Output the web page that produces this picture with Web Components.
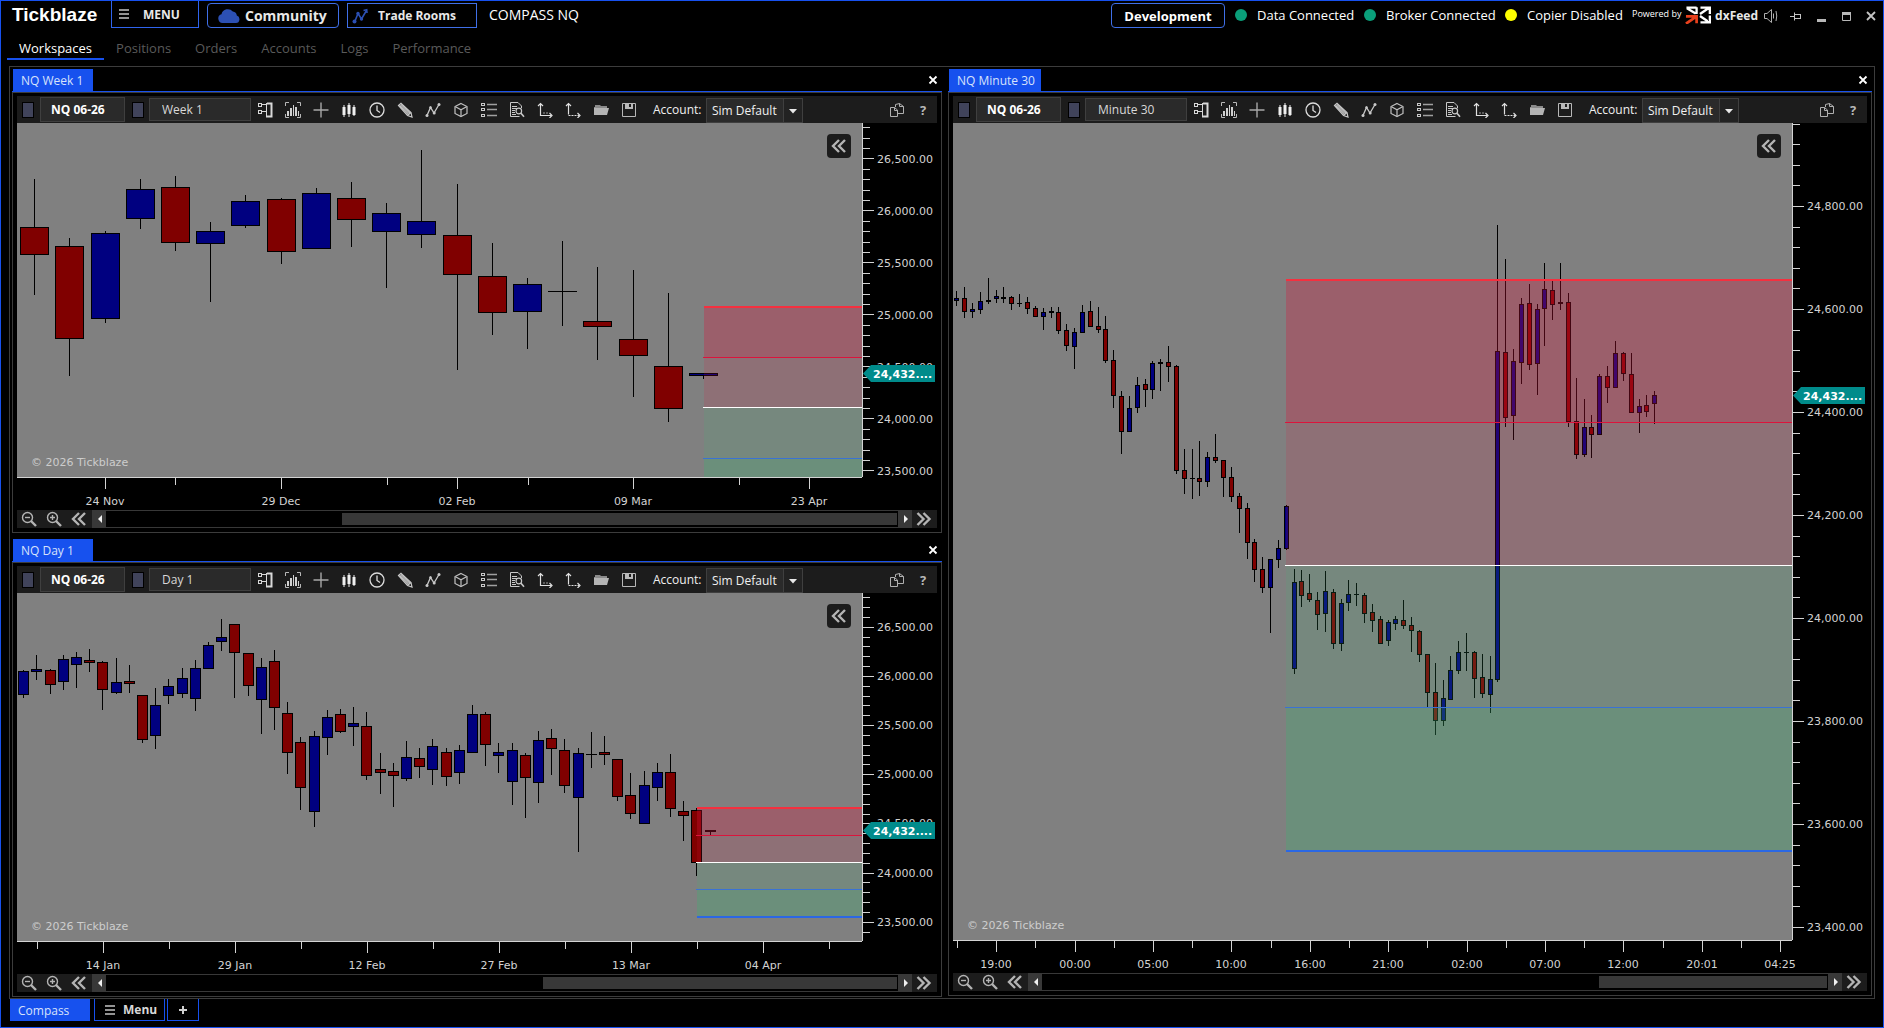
<!DOCTYPE html>
<html lang="en">
<head>
<meta charset="utf-8">
<title>Tickblaze</title>
<style>
  html, body { height: 100%; margin: 0; background: #000; }
  body { font-family: "Open Sans", "Noto Sans", sans-serif; font-size: 12px; color: #fff; }
</style>
</head>
<body>
<tb-app></tb-app>

<script>
const BASE = `
  * { box-sizing: border-box; }
  button { font: inherit; color: inherit; background: none; border: 0; padding: 0; margin: 0; cursor: pointer; }
  svg { display: block; }
`;

function define(name, css, markup, setup) {
  customElements.define(name, class extends HTMLElement {
    connectedCallback() {
      if (this.shadowRoot) return;
      const root = this.attachShadow({ mode: "open" });
      const html = typeof markup === "function" ? markup(this) : markup;
      root.innerHTML = `<style>${BASE}${css}</style>${html}`;
      if (setup) setup(this, root);
    }
  });
}

/* ---------- icons ---------- */
const ICONS = {
  layout: `<g fill="none" stroke="#d8d8d8"><rect x="1.5" y="1.5" width="3" height="3"/><rect x="1.5" y="8.5" width="3" height="3"/><path d="M5 2.500H9M5 9.500H9M9.500 1V15.500"/><path d="M10 1.500H14.500V14.500H10" stroke-width="2"/></g>`,
  indicator: `<g fill="none" stroke="#b8b8b8"><path d="M.5 4V.5H4M12 .5H15.500V4M.5 12V15.500H4M12 15.500H15.500V12"/></g><path fill="#d0d0d0" d="M2 9h2v5H2zM5 6h2v8H5zM8 3h1v11H8zM10 5h2v9h-2zM13 9h1v5h-1z"/>`,
  cross: `<path d="M8 .5V15.500M.5 8H15.500" stroke="#a8a8a8" stroke-width="1.400"/>`,
  candles: `<path fill="#f0f0f0" d="M1.500 5h3v8h-3zM6.500 3h3v9h-3zM11.500 5h3v8h-3z"/><path stroke="#f0f0f0" d="M3 3V15M8 1V15M13 3V14"/>`,
  clock: `<g fill="none" stroke="#dcdcdc" stroke-width="1.300"><circle cx="8" cy="8" r="7"/><path d="M8 3.500V8.500L11 10.500"/></g>`,
  pencil: `<g fill="none" stroke="#c8c8c8" stroke-width="1.200"><path d="M1.500 3.500L4 1.200L14 10.500L15 15L10.500 13.500Z"/><path d="M2.500 3.500L12 13M4 2.500L13.500 11.500M10.500 13.500L14 10.500"/></g><path fill="#aaa" d="M3 3.500L4 2.300L12.500 10.500L11 12.500Z"/>`,
  trend: `<g fill="none" stroke="#c8c8c8" stroke-width="1.300"><path d="M2 13.500L5.500 5.500L9 11L14 2.500"/></g><g fill="#c8c8c8"><circle cx="2" cy="13.500" r="1.500"/><circle cx="5.500" cy="5.500" r="1.300"/><circle cx="9.200" cy="11" r="1.500"/><circle cx="14" cy="2.500" r="1.500"/></g>`,
  cube: `<g fill="none" stroke="#c0c0c0" stroke-width="1.200"><path d="M8 1.500L14 4.500V11.500L8 14.500L2 11.500V4.500Z"/><path d="M2.500 4.800L8 7.800L13.500 4.800M8 7.800V14.500"/></g>`,
  list: `<g fill="none" stroke="#c8c8c8"><rect x=".5" y="1.500" width="3" height="2"/><rect x=".5" y="6.500" width="3" height="2"/><rect x=".5" y="12.500" width="3" height="2"/><path d="M6 2.500H16M6 7.500H16M6 13.500H16" stroke="#a0a0a0" stroke-width="1.500"/></g>`,
  report: `<g fill="none" stroke="#c8c8c8"><path d="M10.500 14.500H1.500V.5H9L12.500 4V6"/><path d="M3 4.500H8M3 6.500H8M3 8.500H6M3 10.500H6M3 12.500H7"/><circle cx="9.800" cy="9" r="2.800" stroke-width="1.200"/><path d="M11.800 11L15 14.800" stroke-width="1.600"/></g>`,
  axisA: `<g fill="none" stroke="#e0e0e0" stroke-width="1.200"><path d="M3.500 2V13.500H14"/><path d="M1 4L3.500 1.500L6 4M12.500 11L15 13.500L12.500 16"/><path d="M6 11H11" stroke-dasharray="2 1" stroke="#999"/></g>`,
  axisB: `<g fill="none" stroke="#e0e0e0" stroke-width="1.200"><path d="M3.500 2V12.500"/><path d="M1 4L3.500 1.500L6 4M12.500 11L15 13.500L12.500 16"/><path d="M3.500 13.500H14" stroke-dasharray="2 1"/></g>`,
  folder: `<path fill="#8a8a8a" d="M2 3h5l1 1h6v2H2z"/><path fill="#b4b4b4" d="M3 6h13l-2 7H1V5z"/>`,
  save: `<path fill="none" stroke="#b8b8b8" d="M1.500 1.500H14.500V14.500H1.500Z"/><path fill="#b8b8b8" d="M4 2h8v5H4z"/><path fill="#1c1c1c" d="M8 2h2v3H8z"/>`,
  copy: `<g fill="none" stroke="#b0b0b0"><path d="M2 14.500H8.500V8L5.500 5.500H1.500V14.500Z"/><path d="M6.500 5V2.500L10.500 1.500L14.500 4.500V11.500H9"/><path d="M10.500 1.500V4.500H14.500M5.500 5.500V8.500H8.500"/></g>`,
  zoomOut: `<g fill="none" stroke="#b4b4b4" stroke-width="1.400"><circle cx="6.500" cy="6.500" r="5"/><path d="M4 6.500H9"/><path d="M10 10L15 15" stroke-width="2.400"/></g>`,
  zoomIn: `<g fill="none" stroke="#b4b4b4" stroke-width="1.400"><circle cx="6.500" cy="6.500" r="5"/><path d="M4 6.500H9M6.500 4V9"/><path d="M10 10L15 15" stroke-width="2.400"/></g>`,
  back: `<path fill="none" stroke="#b4b4b4" stroke-width="2.400" d="M8 2L2 8L8 14M14 2L8 8L14 14"/>`,
  forward: `<path fill="none" stroke="#b4b4b4" stroke-width="2.400" d="M1.500 2L7.500 8L1.500 14M7.500 2L13.500 8L7.500 14"/>`,
  close: `<path fill="none" stroke="#fff" stroke-width="1.800" d="M4.500 4.500L11.500 11.500M11.500 4.500L4.500 11.500"/>`,
  menu: `<path stroke="#c4c4c4" stroke-width="1.600" d="M3 4H13M3 8H13M3 12H13"/>`,
  plus: `<path stroke="#d0d0d0" stroke-width="2" d="M8 4V12M4 8H12"/>`,
  caret: `<path fill="#e8e8e8" d="M4 6H12L8 10.500Z"/>`,
  left: `<path fill="#f0f0f0" d="M10 4V12L6 8Z"/>`,
  right: `<path fill="#f0f0f0" d="M6 4V12L10 8Z"/>`,
  pin: `<g fill="none" stroke="#c4c4c4"><path d="M2 8.500H6M6.500 4.500V12.500"/><rect x="6.500" y="6.500" width="6" height="4"/></g>`,
  minimize: `<path fill="#b8b8b8" d="M4 11h9v3H4z"/>`,
  maximize: `<path fill="none" stroke="#b8b8b8" d="M4.500 5V12.500H12.500V5"/><path fill="#b8b8b8" d="M4 4h9v3H4z"/>`,
  exit: `<path fill="none" stroke="#c4c4c4" stroke-width="1.800" d="M4 4L12 12M12 4L4 12"/>`,
  sound: `<g fill="none" stroke="#b0b0b0"><path d="M1.500 5.500H4L8.500 1.500V14.500L4 10.500H1.500Z"/><path d="M10.500 5.500V10.500M13 3Q14.500 8 13 13"/></g>`,
  trade: `<g fill="none" stroke="#2c50b4" stroke-width="1.600"><path d="M3 13L6 5.500L9.500 11L14.500 2.500"/><path d="M11.500 2.500L14.700 1.800L15 5"/></g><g fill="#2c50b4"><circle cx="2.500" cy="13.500" r="2"/><circle cx="6" cy="5.500" r="1.700"/><circle cx="9.500" cy="11" r="1.700"/></g>`
};
define("tb-icon", `:host { display: block; width: 16px; height: 16px; flex: none; }`,
  el => `<svg width="16" height="16" viewBox="0 0 16 16" aria-hidden="true">${ICONS[el.getAttribute("name")]}</svg>`);

/* ---------- title bar ---------- */
define("tb-title-bar", `
  :host { display: flex; align-items: flex-start; height: 31px; color: #fff; font-size: 13px; padding: 0 0 0 11px; }
  .brand { font: bold 19px/28px "Liberation Sans", sans-serif; width: 99px; }
  button.box { display: flex; align-items: center; border: 1px solid #3f6fe8; height: 25px; margin-top: 2px; font-weight: bold; color: #e8e8e8; }
  button.menu { height: 27px; margin-top: 0; border-top: 0; width: 88px; padding-left: 4px; gap: 11px; border-color: #2f64ee; font-size: 12px; margin-right: 8px; }
  button.community { width: 132px; border-radius: 4px; padding-left: 10px; gap: 5px; font-size: 14px; margin-right: 8px; }
  button.rooms { width: 130px; padding-left: 4px; gap: 10px; font-size: 12px; margin-right: 12px; }
  button.dev { width: 114px; justify-content: center; border-radius: 4px; color: #fff; margin-right: 10px; }
  .name { line-height: 28px; font-size: 14px; flex: 1; }
  .status { display: flex; align-items: center; height: 28px; }
  .status::before { content: ""; width: 12px; height: 12px; border-radius: 50%; background: var(--dot); margin-right: 10px; }
  .status.data { width: 129px; } .status.broker { width: 141px; } .status.copier { width: 127px; }
  .powered { font-size: 9px; line-height: 26px; width: 53px; white-space: nowrap; }
  .feed { display: flex; gap: 4px; align-items: center; height: 28px; font-weight: bold; font-size: 12px; color: #e8e8e8; width: 73px; }
  .feed svg { margin-top: -1px; }
  .controls { display: flex; height: 30px; align-items: center; }
  .controls button { width: 25px; display: grid; place-items: center; }
`, `
  <div class="brand">Tickblaze</div>
  <button class="box menu"><tb-icon name="menu"></tb-icon>MENU</button>
  <button class="box community">
    <svg width="22" height="15" viewBox="0 0 22 15" aria-hidden="true"><path fill="#2c50b4" d="M5 15A4.500 4.500 0 0 1 3.500 6.200A6.500 6.500 0 0 1 14.800 3.500A4.500 4.500 0 0 1 18.800 7.600A3.800 3.800 0 0 1 18 15Z"/></svg>Community</button>
  <button class="box rooms"><tb-icon name="trade"></tb-icon>Trade Rooms</button>
  <div class="name">COMPASS NQ</div>
  <button class="box dev">Development</button>
  <div class="status data" style="--dot:#0a9f7a">Data Connected</div>
  <div class="status broker" style="--dot:#0a9f7a">Broker Connected</div>
  <div class="status copier" style="--dot:#ffff00">Copier Disabled</div>
  <div class="powered">Powered by</div>
  <div class="feed">
    <svg width="27" height="18" viewBox="0 0 27 18" aria-hidden="true">
      <g fill="none" stroke="#fff" stroke-width="2.400"><path d="M1.500 1.300H12M12 1V8M2 2L11 7.500M16 1.300H25.700V8M25 1.500L15.500 8M25.700 9.500V16.700H16M15.500 10L25 16.500"/></g>
      <path fill="none" stroke="#e8401c" stroke-width="2.800" d="M1 10.500H12V17.500M12 10.500L1 18"/></svg>
    dxFeed</div>
  <div class="controls">
    <button aria-label="Sound"><tb-icon name="sound"></tb-icon></button>
    <button aria-label="Pin"><tb-icon name="pin"></tb-icon></button>
    <button aria-label="Minimize"><tb-icon name="minimize"></tb-icon></button>
    <button aria-label="Maximize"><tb-icon name="maximize"></tb-icon></button>
    <button aria-label="Close"><tb-icon name="exit"></tb-icon></button>
  </div>
`);

/* ---------- main navigation ---------- */
define("tb-nav", `
  :host { display: block; padding-left: 6px; }
  nav { display: flex; }
  a { color: #5a5a5a; font-size: 13px; line-height: 20px; padding: 6px 12px 0; text-decoration: none; border-bottom: 2px solid transparent; }
  a.on { color: #fff; border-color: #1751ee; }
`, `<nav><a class="on" href="#workspaces">Workspaces</a><a href="#positions">Positions</a><a href="#orders">Orders</a><a href="#accounts">Accounts</a><a href="#logs">Logs</a><a href="#performance">Performance</a></nav>`);

/* ---------- docked panel ---------- */
define("tb-panel", `
  :host { display: flex; flex-direction: column; min-width: 0; min-height: 0; }
  header { display: flex; justify-content: space-between; align-items: center; height: 23px; border-bottom: 1px solid #1751ee; padding: 0 1px; }
  h2 { margin: 0; font-size: 12px; font-weight: normal; line-height: 20px; padding: 2px 6px 0 8px; min-width: 80px; background: #1751ee; color: #d8e2fb; }
  .body { flex: 1; min-height: 0; display: flex; flex-direction: column; border: 1px solid #3c3c3c; padding: 3px 4px 4px; }
`, el => `<header><h2>${el.getAttribute("label")}</h2><button aria-label="Close panel"><tb-icon name="close"></tb-icon></button></header><div class="body"><slot></slot></div>`);

/* ---------- chart toolbar ---------- */
const TOOLS = ["layout", "indicator", "cross", "candles", "clock", "pencil", "trend", "cube", "list", "report", "axisA", "axisB", "folder", "save"];
define("tb-toolbar", `
  :host { display: flex; align-items: center; height: 27px; flex: none; background: #1c1c1c; padding: 0 5px; color: #f0f0f0; }
  .swatch { width: 12px; height: 16px; border: 1px solid #000; background: #40435a; flex: none; }
  input { font: inherit; color: #d8d8d8; background: #2a2a2a; border: 1px solid #3f3f3f; padding: 0 0 0 12px; margin: 0; min-width: 0; outline: 0; }
  .symbol { width: 85px; height: 25px; margin: 0 7px 0 6px; font-weight: bold; color: #fff; padding-left: 10px; }
  .period { width: 102px; height: 23px; margin-left: 5px; }
  .tool { width: 28px; height: 27px; display: grid; place-items: center; flex: none; }
  label { flex: 0 0 53px; margin-left: 10px; }
  .combo { display: grid; width: 97px; height: 25px; margin-top: 2px; flex: none; }
  .combo > * { grid-area: 1 / 1; }
  select { appearance: none; font: inherit; color: #f0f0f0; background: linear-gradient(90deg, #2a2a2a 76px, #3f3f3f 76px 77px, #222 77px); border: 1px solid #3f3f3f; border-radius: 0; padding: 0 0 0 5px; outline: 0; }
  .combo tb-icon { justify-self: end; align-self: center; margin-right: 2px; pointer-events: none; }
  .end { margin-left: auto; display: flex; align-items: center; }
  .help { width: 18px; font-weight: bold; font-size: 13px; color: #b8b8b8; margin-left: 9px; }
`, el => `
  <span class="swatch"></span><input class="symbol" aria-label="Symbol" value="${el.getAttribute("symbol")}">
  <span class="swatch"></span><input class="period" aria-label="Bar type" value="${el.getAttribute("period")}">
  ${TOOLS.map(t => `<button class="tool" aria-label="${t}"><tb-icon name="${t}"></tb-icon></button>`).join("")}
  <label for="account">Account:</label>
  <span class="combo"><select id="account"><option>Sim Default</option></select><tb-icon name="caret"></tb-icon></span>
  <span class="end"><button aria-label="Copy"><tb-icon name="copy"></tb-icon></button><button class="help">?</button></span>
`);

/* ---------- chart scroll bar ---------- */
define("tb-scrollbar", `
  :host { display: flex; height: 18px; background: #000; }
  .nav { width: 25px; background: #1c1c1c; display: grid; place-items: center start; padding-left: 4px; }
  .arrow { width: 14px; background: #383838; display: grid; place-items: center; }
  .track { flex: 1; border: solid #383838; border-width: 1px 0; padding: 2px 1px 2px 0; display: flex; }
  .thumb { flex: 1; margin-left: var(--start); background: #383838; }
`, el => `
  <button class="nav" aria-label="Zoom out"><tb-icon name="zoomOut"></tb-icon></button>
  <button class="nav" aria-label="Zoom in"><tb-icon name="zoomIn"></tb-icon></button>
  <button class="nav" aria-label="Oldest"><tb-icon name="back"></tb-icon></button>
  <button class="arrow" aria-label="Scroll left"><tb-icon name="left"></tb-icon></button>
  <div class="track" style="--start:${el.getAttribute("start")}"><div class="thumb"></div></div>
  <button class="arrow" aria-label="Scroll right"><tb-icon name="right"></tb-icon></button>
  <button class="nav" aria-label="Latest"><tb-icon name="forward"></tb-icon></button>
`);

/* ---------- chart data: bars are [high, body top, body bottom, low, colour] in plot units ---------- */
const r = "#800000", b = "#000080";
const CHARTS = {
  week: {
    first: 16.7, step: 35.2, half: 14, scroll: "29.8%",
    bars: [[56,104,132,172,r],[115,123,216,253,r],[108,110,196,200,b],[56,66,96,106,b],[53,64,120,128,r],[99,108,121,179,b],[72,78,103,105,b],[75,76,129,141,r],[65,70,126,126,b],[59,75,97,124,r],[80,90,109,165,b],[27,98,112,125,b],[61,112,152,247,r],[120,153,190,212,r],[155,161,189,226,b],[118,168,169,203,b],[144,198,204,237,r],[147,216,233,274,r],[170,243,286,299,r],[250,250,253,256,b]],
    zone: { x: 687, top: 183, upper: 234, mid: 284, lower: 335, bottom: 386 },
    price: { at: 35.4, tick: 10.4, value: 26500, by: 500, ticks: 30 }, badge: 242,
    time: { at: [88,158,264,370,440,511,616,722,792], labels: ["24 Nov","","29 Dec","","02 Feb","","09 Mar","","23 Apr"] }
  },
  day: {
    first: 5.7, step: 13.2, half: 5, scroll: "55.3%",
    bars: [[77,78,102,105,b],[62,76,79,87,b],[76,77,92,101,r],[62,66,89,97,b],[59,64,72,95,b],[56,67,70,79,r],[68,69,97,117,r],[65,89,100,101,b],[72,88,91,100,r],[102,102,147,150,r],[95,112,143,156,b],[86,93,103,111,b],[75,85,101,105,b],[67,75,106,118,b],[49,52,76,76,b],[26,44,49,58,b],[31,31,60,105,r],[60,60,93,103,r],[65,74,107,141,b],[57,68,115,137,r],[109,120,160,181,r],[144,149,195,217,r],[138,143,219,234,b],[117,124,145,162,b],[116,121,139,140,r],[114,130,134,153,b],[119,133,183,187,r],[160,176,180,201,r],[170,178,183,214,r],[148,164,186,188,b],[155,165,174,185,r],[146,153,177,192,b],[155,159,184,193,r],[152,157,180,191,b],[112,121,160,160,b],[119,121,152,173,r],[150,159,163,180,b],[150,157,189,212,b],[160,162,185,225,r],[138,147,190,210,b],[136,145,156,182,r],[146,157,193,200,r],[155,160,205,259,b],[139,161,162,175,r],[143,159,162,172,r],[166,166,204,208,r],[180,202,221,226,r],[178,192,231,231,b],[170,179,195,208,b],[161,179,216,224,r],[208,218,223,248,r],[215,217,270,283,r],[237,237,239,242,r]],
    zone: { x: 680, top: 214, upper: 242, mid: 269, lower: 296, bottom: 323 },
    price: { at: 33.8, tick: 9.83, value: 26500, by: 500, ticks: 31 }, badge: 229,
    time: { at: [20,86,152,218,284,350,416,482,548,614,680,746,812], labels: ["","14 Jan","","29 Jan","","12 Feb","","27 Feb","","13 Mar","","04 Apr",""] }
  },
  minute: {
    first: 2.94, step: 7.84, half: 2, scroll: "70.9%",
    bars: [[168,175,178,183,b],[164,175,189,195,r],[180,186,189,195,b],[169,178,187,191,b],[155,177,179,181,b],[167,173,176,180,b],[164,174,176,180,b],[173,174,181,187,r],[171,180,181,184,b],[174,179,186,191,r],[183,185,194,194,r],[185,189,194,207,b],[184,188,190,195,b],[184,189,208,211,r],[201,207,223,228,r],[205,209,224,246,b],[182,189,210,210,b],[178,188,204,204,r],[184,203,207,210,r],[193,206,238,240,r],[227,237,273,285,r],[268,273,309,331,r],[273,285,309,309,b],[254,262,285,290,b],[256,261,267,284,r],[238,240,267,276,b],[236,239,241,268,b],[223,239,244,259,r],[242,243,348,351,r],[326,347,356,371,r],[326,355,356,376,b],[318,355,359,373,r],[329,334,359,364,b],[311,334,338,340,r],[337,337,355,374,r],[344,354,374,379,r],[370,373,386,410,r],[380,385,420,436,r],[416,419,447,459,r],[434,446,465,470,r],[436,436,465,510,b],[417,425,437,445,b],[382,383,426,427,b],[446,459,546,551,b],[447,458,473,484,r],[451,470,477,479,r],[469,477,492,507,r],[448,468,491,509,b],[466,469,521,526,r],[476,480,521,528,b],[457,471,480,488,b],[460,471,472,483,b],[470,472,491,500,r],[481,489,498,509,r],[493,496,521,521,r],[497,499,518,523,b],[493,496,501,507,b],[477,497,503,506,r],[494,502,508,529,r],[507,508,532,539,r],[531,531,570,584,r],[540,569,598,612,r],[557,575,598,603,b],[533,547,577,577,b],[518,529,548,551,b],[510,529,530,548,b],[528,529,556,575,r],[531,554,571,575,r],[533,556,572,590,b],[102,228,557,559,b],[136,229,295,304,r],[226,238,293,317,b],[175,181,240,261,b],[161,180,242,247,r],[181,186,241,272,b],[140,166,186,223,b],[158,167,182,197,r],[140,179,181,187,b],[170,179,299,304,r],[255,298,332,336,r],[276,304,332,334,b],[292,304,312,335,r],[251,253,312,312,b],[243,253,265,280,r],[218,230,265,265,b],[229,230,251,258,r],[230,251,290,290,r],[276,283,290,310,b],[272,282,289,294,r],[268,272,281,301,b]],
    zone: { x: 333, top: 156, upper: 299, mid: 442, lower: 584, bottom: 727 },
    price: { at: 83, tick: 20.6, value: 24800, by: 200, ticks: 35 }, badge: 264,
    time: { at: Array.from({ length: 22 }, (_, k) => Math.round(4 + 39.2 * k)), labels: ["","19:00","","00:00","","05:00","","10:00","","16:00","","21:00","","02:00","","07:00","","12:00","","20:01","","04:25"] }
  }
};

const rect = (x, y, w, h, fill, extra = "") => `<rect x="${x}" y="${y}" width="${w}" height="${h}" fill="${fill}" ${extra}/>`;

function drawBars(c) {
  return c.bars.map(([hi, top, bot, lo, fill], i) => {
    const x = Math.ceil(c.first + c.step * i), h = bot - top, w = c.half * 2 + 1;
    return rect(x, hi, 1, lo - hi, "#000") + rect(x - c.half, top, w, h, "#000") +
      (h > 2 ? rect(x - c.half + 1, top + 1, w - 2, h - 2, fill) : "");
  }).join("");
}
function drawZone({ x, top, upper, mid, lower, bottom }) {
  const red = a => `rgba(220,20,60,${a})`, green = a => `rgba(60,179,113,${a})`;
  return rect(x, top, "100%", upper - top, red(.3)) + rect(x, upper, "100%", mid - upper, red(.15)) +
    rect(x, mid, "100%", lower - mid, green(.15)) + rect(x, lower, "100%", bottom - lower, green(.3)) +
    rect(x, top, "100%", 2, "#f5303f") + rect(x - 1, upper, "100%", 1, "#dc143c") + rect(x - 1, mid, "100%", 1, "#fff") +
    rect(x - 1, lower, "100%", 1, "#3a72d4") + rect(x, bottom, "100%", 2, "#2b68e4");
}
function drawPrices({ at, tick, value, by, ticks }) {
  let out = "";
  for (let k = -9; k <= ticks; k++) {
    const exact = at + tick * k, y = Math.round(exact), major = k % 5 === 0;
    if (y < 0) continue;
    out += rect(1, y, major ? 11 : 7, 1, "#d3d3d3");
    if (major) out += `<text x="15" y="${Math.floor(exact + 4.6)}">${(value - by * k / 5).toLocaleString("en-US", { minimumFractionDigits: 2 })}</text>`;
  }
  return out;
}

define("tb-chart", `
  :host { flex: 1; min-height: 0; display: grid; grid-template: minmax(0, 1fr) 33px 18px / minmax(0, 1fr) 75px; font: 11px "DejaVu Sans", Verdana, sans-serif; color: #d3d3d3; }
  .plot { display: grid; background: #808080; overflow: hidden; }
  .plot > * { grid-area: 1 / 1; }
  svg { width: 100%; height: 100%; min-height: 0; shape-rendering: crispEdges; }
  text { fill: #d3d3d3; }
  .note { align-self: end; margin: 0 0 7px 14px; line-height: 14px; color: #cdcdcd; }
  .collapse { justify-self: end; align-self: start; margin: 11px; width: 24px; height: 24px; border-radius: 4px; background: #1c1c1c; display: grid; place-items: center; }
  .prices { border-left: 1px solid #d3d3d3; min-height: 0; }
  .prices svg { margin-left: -1px; overflow: visible; }
  .prices polygon { fill: #008b8b; shape-rendering: auto; }
  .prices .last { fill: #fff; font-weight: bold; }
  .times { border-top: 1px solid #d3d3d3; }
  .times svg { overflow: visible; }
  tb-scrollbar { grid-column: 1 / -1; }
`, el => {
  const c = CHARTS[el.getAttribute("data")];
  const y = c.badge;
  return `
  <div class="plot">
    <svg role="img" aria-label="Price chart">${drawBars(c)}${drawZone(c.zone)}</svg>
    <div class="note">© 2026 Tickblaze</div>
    <button class="collapse" aria-label="Expand side bar"><tb-icon name="back"></tb-icon></button>
  </div>
  <div class="prices"><svg>${drawPrices(c.price)}
    <polygon points="1,${y + 8.5} 9,${y} 73,${y} 73,${y + 17} 9,${y + 17}"/><text class="last" x="11" y="${y + 13}">24,432....</text></svg></div>
  <div class="times"><svg>${c.time.at.map((x, i) => {
    const t = c.time.labels[i];
    return rect(x, 0, 1, t ? 11 : 7, "#d3d3d3") + (t ? `<text x="${x}" y="27" text-anchor="middle">${t}</text>` : "");
  }).join("")}</svg></div>
  <tb-scrollbar start="${c.scroll}"></tb-scrollbar>`;
});

/* ---------- workspace tabs ---------- */
define("tb-workspace-tabs", `
  :host { display: flex; height: 28px; padding-left: 9px; align-items: flex-start; }
  button { height: 22px; display: flex; align-items: center; }
  .on { width: 80px; background: #1751ee; color: #d8e2fb; padding-left: 8px; margin-right: 4px; }
  .line { border: 1px solid #1751ee; border-top: 0; color: #d8d8d8; font-weight: bold; }
  .menu { width: 71px; padding-left: 7px; gap: 5px; margin-right: 2px; }
  .add { width: 32px; justify-content: center; }
`, `
  <button class="on">Compass</button>
  <button class="line menu"><tb-icon name="menu"></tb-icon>Menu</button>
  <button class="line add" aria-label="Add workspace"><tb-icon name="plus"></tb-icon></button>
`);

/* ---------- application shell ---------- */
define("tb-app", `
  :host { display: flex; flex-direction: column; height: 100vh; border: 1px solid #1751ee; box-sizing: border-box; background: #000; }
  .dock { flex: 1; min-height: 0; margin: 6px 8px 0; border: 1px solid #3c3c3c; padding: 2px 2px 1px; display: grid; gap: 6px;
    grid-template: minmax(0, 464fr) minmax(0, 458fr) / minmax(0, 930fr) minmax(0, 924fr); }
  .tall { grid-area: 1 / 2 / 3 / 3; margin-bottom: 1px; }
`, `
  <tb-title-bar></tb-title-bar>
  <tb-nav></tb-nav>
  <main class="dock">
    <tb-panel label="NQ Week 1"><tb-toolbar symbol="NQ 06-26" period="Week 1"></tb-toolbar><tb-chart data="week"></tb-chart></tb-panel>
    <tb-panel class="tall" label="NQ Minute 30"><tb-toolbar symbol="NQ 06-26" period="Minute 30"></tb-toolbar><tb-chart data="minute"></tb-chart></tb-panel>
    <tb-panel label="NQ Day 1"><tb-toolbar symbol="NQ 06-26" period="Day 1"></tb-toolbar><tb-chart data="day"></tb-chart></tb-panel>
  </main>
  <tb-workspace-tabs></tb-workspace-tabs>
`);
</script>
</body>
</html>
